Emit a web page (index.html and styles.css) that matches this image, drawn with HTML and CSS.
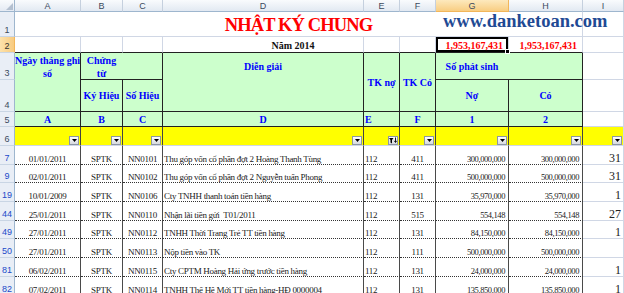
FILE: index.html
```html
<!DOCTYPE html>
<html lang="vi">

<head>
    <meta charset="UTF-8">
    <meta name="viewport" content="width=device-width, initial-scale=1.0">
    <title>Nhật ký chung</title>
    <link rel="stylesheet" href="styles.css">
</head>

<body>

    <div class="sheet">
        <!-- Column headers -->
        <div class="corner"><svg width="7" height="7" viewBox="0 0 7 7"><path d="M7 0V7H0z" fill="#b4c0d0"/></svg></div>
        <div class="ch">A</div>
        <div class="ch">B</div>
        <div class="ch">C</div>
        <div class="ch">D</div>
        <div class="ch">E</div>
        <div class="ch">F</div>
        <div class="ch sel">G</div>
        <div class="ch">H</div>
        <div class="ch">I</div>

        <!-- Row 1 -->
        <div class="rh">1</div>
        <div class="cell title">NHẬT KÝ CHUNG</div>
        <div class="cell"></div>

        <!-- Row 2 -->
        <div class="rh sel">2</div>
        <div class="cell edge"></div>
        <div class="cell edge"></div>
        <div class="cell edge"></div>
        <div class="cell edge year">Năm 2014</div>
        <div class="cell edge"></div>
        <div class="cell edge"></div>
        <div class="cell edge total active">1,953,167,431</div>
        <div class="cell edge total">1,953,167,431</div>
        <div class="cell"></div>

        <!-- Row 3 -->
        <div class="rh">3</div>
        <div class="cell hd hd-date"><span>Ngày tháng ghi<br>sổ</span></div>
        <div class="cell hd hd-doc"><span>Chứng<br>từ</span></div>
        <div class="cell hd hd-desc"><span>Diễn giải</span></div>
        <div class="cell hd hd-acc"><span>TK nợ</span></div>
        <div class="cell hd hd-acc"><span>TK Có</span></div>
        <div class="cell hd hd-amt"><span>Số phát sinh</span></div>
        <div class="cell"></div>

        <!-- Row 4 -->
        <div class="rh">4</div>
        <div class="cell hd">Ký Hiệu</div>
        <div class="cell hd">Số Hiệu</div>
        <div class="cell hd">Nợ</div>
        <div class="cell hd">Có</div>
        <div class="cell"></div>

        <!-- Row 5 -->
        <div class="rh">5</div>
        <div class="cell hd">A</div>
        <div class="cell hd">B</div>
        <div class="cell hd">C</div>
        <div class="cell hd">D</div>
        <div class="cell hd left">E</div>
        <div class="cell hd">F</div>
        <div class="cell hd">1</div>
        <div class="cell hd">2</div>
        <div class="cell"></div>

        <!-- Row 6: filter buttons -->
        <div class="rh">6</div>
        <div class="cell flt"><span class="btn"><svg width="5" height="3"><path d="M0 0h5L2.5 3z"/></svg></span></div>
        <div class="cell flt"><span class="btn"><svg width="5" height="3"><path d="M0 0h5L2.5 3z"/></svg></span></div>
        <div class="cell flt"><span class="btn"><svg width="5" height="3"><path d="M0 0h5L2.5 3z"/></svg></span></div>
        <div class="cell flt"><span class="btn"><svg width="5" height="3"><path d="M0 0h5L2.5 3z"/></svg></span></div>
        <div class="cell flt"><span class="btn"><svg width="8" height="7" viewBox="0 0 8 7"><path d="M0 1h4.5L3 3v3.5L1.5 5.5V3z"/><path d="M6.5 0.5v4.5M5.3 3.8l1.2 1.7 1.2-1.7" stroke="#000" stroke-width="0.9" fill="none"/></svg></span></div>
        <div class="cell flt"><span class="btn"><svg width="5" height="3"><path d="M0 0h5L2.5 3z"/></svg></span></div>
        <div class="cell flt"><span class="btn"><svg width="5" height="3"><path d="M0 0h5L2.5 3z"/></svg></span></div>
        <div class="cell flt"><span class="btn"><svg width="5" height="3"><path d="M0 0h5L2.5 3z"/></svg></span></div>
        <div class="cell flt last"><span class="btn"><svg width="5" height="3"><path d="M0 0h5L2.5 3z"/></svg></span></div>

        <!-- Data rows -->
        <div class="rh hit">7</div>
        <div class="cell dt mid">01/01/2011</div>
        <div class="cell dt mid">SPTK</div>
        <div class="cell dt mid">NN0101</div>
        <div class="cell dt">Thu góp vốn cổ phần đợt 2 Hoàng Thanh Tùng</div>
        <div class="cell dt">112</div>
        <div class="cell dt mid">411</div>
        <div class="cell dt amt">300,000,000</div>
        <div class="cell dt amt">300,000,000</div>
        <div class="cell num">31</div>

        <div class="rh hit">9</div>
        <div class="cell dt mid">02/01/2011</div>
        <div class="cell dt mid">SPTK</div>
        <div class="cell dt mid">NN0102</div>
        <div class="cell dt">Thu góp vốn cổ phần đợt 2 Nguyễn tuấn Phong</div>
        <div class="cell dt">112</div>
        <div class="cell dt mid">411</div>
        <div class="cell dt amt">500,000,000</div>
        <div class="cell dt amt">500,000,000</div>
        <div class="cell num">31</div>

        <div class="rh hit">19</div>
        <div class="cell dt mid">10/01/2009</div>
        <div class="cell dt mid">SPTK</div>
        <div class="cell dt mid">NN0106</div>
        <div class="cell dt">Cty TNHH thanh toán tiền hàng</div>
        <div class="cell dt">112</div>
        <div class="cell dt mid">131</div>
        <div class="cell dt amt">35,970,000</div>
        <div class="cell dt amt">35,970,000</div>
        <div class="cell num">1</div>

        <div class="rh hit">44</div>
        <div class="cell dt mid">25/01/2011</div>
        <div class="cell dt mid">SPTK</div>
        <div class="cell dt mid">NN0110</div>
        <div class="cell dt">Nhận lãi tiền gửi&nbsp; T01/2011</div>
        <div class="cell dt">112</div>
        <div class="cell dt mid">515</div>
        <div class="cell dt amt">554,148</div>
        <div class="cell dt amt">554,148</div>
        <div class="cell num">27</div>

        <div class="rh hit">49</div>
        <div class="cell dt mid">27/01/2011</div>
        <div class="cell dt mid">SPTK</div>
        <div class="cell dt mid">NN0112</div>
        <div class="cell dt">TNHH Thời Trang Trẻ TT tiền hàng</div>
        <div class="cell dt">112</div>
        <div class="cell dt mid">131</div>
        <div class="cell dt amt">84,150,000</div>
        <div class="cell dt amt">84,150,000</div>
        <div class="cell num">1</div>

        <div class="rh hit">50</div>
        <div class="cell dt mid">27/01/2011</div>
        <div class="cell dt mid">SPTK</div>
        <div class="cell dt mid">NN0113</div>
        <div class="cell dt">Nộp tiền vào TK</div>
        <div class="cell dt">112</div>
        <div class="cell dt mid">111</div>
        <div class="cell dt amt">500,000,000</div>
        <div class="cell dt amt">500,000,000</div>
        <div class="cell num"></div>

        <div class="rh hit">81</div>
        <div class="cell dt mid">06/02/2011</div>
        <div class="cell dt mid">SPTK</div>
        <div class="cell dt mid">NN0115</div>
        <div class="cell dt">Cty CPTM Hoàng Hải ứng trước tiền hàng</div>
        <div class="cell dt">112</div>
        <div class="cell dt mid">131</div>
        <div class="cell dt amt">24,000,000</div>
        <div class="cell dt amt">24,000,000</div>
        <div class="cell num">1</div>

        <div class="rh hit">82</div>
        <div class="cell dt mid">07/02/2011</div>
        <div class="cell dt mid">SPTK</div>
        <div class="cell dt mid">NN0114</div>
        <div class="cell dt">TNHH Thế Hệ Mới TT tiền hàng-HĐ 0000004</div>
        <div class="cell dt">112</div>
        <div class="cell dt mid">131</div>
        <div class="cell dt amt">135,850,000</div>
        <div class="cell dt amt">135,850,000</div>
        <div class="cell num">1</div>

        <!-- Floating text box over the sheet -->
        <p class="logo">www.danketoan.com</p>
    </div>

</body>

</html>
```

FILE: styles.css
```css
body {
    margin: 0;
    background-color: #ffffff;
    overflow: hidden;
}

.sheet {
    position: relative;
    display: grid;
    grid-template-columns: 15px 66px 42px 40px 201px 36px 36px 73px 74px 41px;
    grid-template-rows: 12px 25px 16px 27px 32px 15px 19px repeat(8, 18.7px);
    width: 624px;
    height: 293px;
    overflow: hidden;
    font-family: "Liberation Serif", "Times New Roman", serif;
    color: #222;
}

/* Excel chrome */
.corner,
.ch,
.rh {
    box-sizing: border-box;
    display: flex;
    font-family: "Liberation Sans", Arial, sans-serif;
    font-size: 9px;
    color: #3b4a5e;
}

.corner {
    align-items: flex-end;
    justify-content: flex-end;
    padding: 0 1px 1px 0;
    background: linear-gradient(#f9fbfd, #e4eaf3);
    border-right: 1px solid #9eb6ce;
    border-bottom: 1px solid #9eb6ce;
}

.ch {
    align-items: center;
    justify-content: center;
    background: linear-gradient(#f9fbfd, #e2e9f2);
    border-right: 1px solid #c5d0de;
    border-bottom: 1px solid #9eb6ce;
}

.rh {
    align-items: flex-end;
    justify-content: center;
    padding-bottom: 1px;
    line-height: 10px;
    background-color: #e9eef6;
    border-right: 1px solid #9eb6ce;
    border-bottom: 1px solid #c9d5e4;
}

.ch.sel {
    background: linear-gradient(#fde9bd, #f8cd82);
    border-right-color: #f2b65a;
    border-bottom-color: #f2b65a;
}

.rh.sel {
    background: linear-gradient(90deg, #fde2ab, #f8cb80);
    color: #333;
    border-right-color: #f2b65a;
}

.rh.hit {
    color: #2149c9;
}

/* Cells */
.cell {
    box-sizing: border-box;
    display: flex;
    align-items: flex-end;
    min-width: 0;
    overflow: hidden;
    white-space: nowrap;
    border-right: 1px solid #d0d7e5;
    border-bottom: 1px solid #d0d7e5;
}

.title {
    grid-column: span 8;
    justify-content: center;
    padding-bottom: 2px;
    font-size: 18.5px;
    font-weight: bold;
    line-height: 1;
    letter-spacing: -0.9px;
    color: #ff0000;
}

.edge {
    border-bottom-color: #222;
}

.year {
    justify-content: center;
    padding: 0 0 1px 60px;
    font-size: 10px;
    font-weight: bold;
    line-height: 11px;
    color: #111;
}

.total {
    justify-content: flex-end;
    padding: 0 5px 1px 0;
    font-size: 10px;
    font-weight: bold;
    line-height: 11px;
    color: #ff0000;
}

.active {
    position: relative;
    overflow: visible;
    box-shadow: inset 0 0 0 2px #000;
}

.active::after {
    content: "";
    position: absolute;
    right: -2px;
    bottom: -2px;
    width: 3px;
    height: 3px;
    background-color: #000;
    border: 1px solid #fff;
}

/* Green table header */
.hd {
    align-items: center;
    justify-content: center;
    text-align: center;
    white-space: normal;
    background-color: #ccffcc;
    border-right-color: #222;
    border-bottom-color: #222;
    font-size: 10px;
    font-weight: bold;
    line-height: 13px;
    color: #0000ff;
}

.hd-date {
    grid-row: span 2;
    align-items: flex-start;
    padding-top: 1px;
}

.hd-doc {
    grid-column: span 2;
    align-items: flex-start;
    padding: 1px 40px 0 0;
}

.hd-desc {
    grid-row: span 2;
    align-items: flex-start;
    padding-top: 7px;
}

.hd-acc {
    grid-row: span 2;
}

.hd-amt {
    grid-column: span 2;
    padding-right: 74px;
}

.hd.left {
    justify-content: flex-start;
    padding-left: 1px;
}

/* Filter row */
.flt {
    justify-content: flex-end;
    padding-right: 1px;
    background-color: #ffff00;
    border-right-color: #444;
}

.flt.last {
    border-right-color: #d0d7e5;
}

.btn {
    box-sizing: border-box;
    display: flex;
    align-items: center;
    justify-content: center;
    width: 10px;
    height: 9px;
    border: 1px solid #8d96a3;
    background: linear-gradient(#ffffff, #d6d9de);
}

/* Data rows */
.dt {
    padding: 0 1px;
    font-size: 9px;
    line-height: 10px;
    letter-spacing: -0.3px;
    color: #1a1a1a;
    border-right-color: #4a4a4a;
    border-bottom: 1px dotted #333;
}

.dt.mid {
    justify-content: center;
}

.dt.amt {
    justify-content: flex-end;
    padding-right: 3px;
    font-size: 8.5px;
    letter-spacing: -0.4px;
}

.num {
    justify-content: flex-end;
    padding-right: 2px;
    font-size: 12px;
    line-height: 12px;
    color: #222;
}

/* Floating text box */
.logo {
    position: absolute;
    left: 443px;
    top: 12px;
    margin: 0;
    font-size: 18.5px;
    font-weight: bold;
    line-height: 1;
    color: #1f4a94;
}
```
